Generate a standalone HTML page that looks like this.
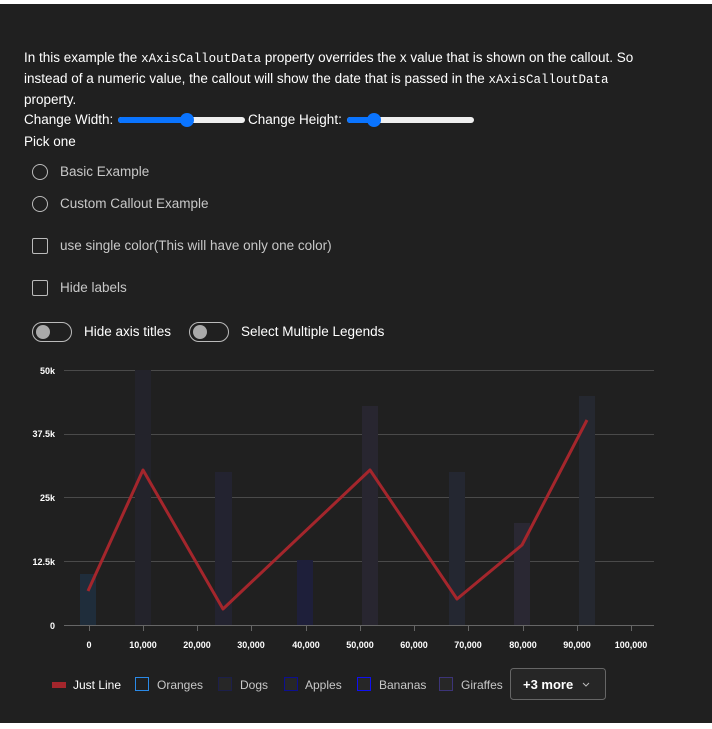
<!DOCTYPE html>
<html><head><meta charset="utf-8"><style>
html,body{margin:0;padding:0;background:#fff;}
body{width:712px;height:729px;overflow:hidden;font-family:"Liberation Sans",sans-serif;}
#f{position:absolute;left:0;top:4px;width:712px;height:719px;background:#202020;}
.t{position:absolute;color:#fff;font-size:13.5px;white-space:nowrap;}
code{font-family:"Liberation Mono",monospace;font-size:12.5px;}
.g{color:#c8c8c8;}
.rad{position:absolute;width:14px;height:14px;border:1px solid #bbb;border-radius:50%;}
.chk{position:absolute;width:14px;height:14px;border:1px solid #bbb;border-radius:2px;}
.tog{position:absolute;width:38px;height:18px;border:1px solid #bbb;border-radius:10px;}
.tog:after{content:"";position:absolute;left:3px;top:2px;width:14px;height:14px;border-radius:50%;background:#aaa;}
.sl{position:absolute;height:6px;border-radius:3px;background:#efefef;}
.sl i{position:absolute;left:0;top:0;height:6px;border-radius:3px;background:#0a74ff;}
.sl b{position:absolute;top:-4px;width:14px;height:14px;border-radius:50%;background:#0a74ff;}
</style></head><body><div id="f"></div>
<div class="t" style="left:24px;top:50px">In this example the <code>xAxisCalloutData</code> property overrides the x value that is shown on the callout. So</div>
<div class="t" style="left:24px;top:71px">instead of a numeric value, the callout will show the date that is passed in the <code>xAxisCalloutData</code></div>
<div class="t" style="left:24px;top:92px">property.</div>
<div class="t" style="left:24px;top:112px">Change Width:</div>
<div class="sl" style="left:118px;top:117px;width:127px"><i style="width:70px"></i><b style="left:62px"></b></div>
<div class="t" style="left:248px;top:112px">Change Height:</div>
<div class="sl" style="left:347px;top:117px;width:127px"><i style="width:28px"></i><b style="left:20px"></b></div>
<div class="t" style="left:24px;top:134px">Pick one</div>
<div class="rad" style="left:32px;top:164px"></div><div class="t g" style="left:60px;top:164px">Basic Example</div>
<div class="rad" style="left:32px;top:196px"></div><div class="t g" style="left:60px;top:196px">Custom Callout Example</div>
<div class="chk" style="left:32px;top:238px"></div><div class="t g" style="left:60px;top:238px">use single color(This will have only one color)</div>
<div class="chk" style="left:32px;top:280px"></div><div class="t g" style="left:60px;top:280px">Hide labels</div>
<div class="tog" style="left:32px;top:322px"></div><div class="t" style="left:84px;top:324px">Hide axis titles</div>
<div class="tog" style="left:189px;top:322px"></div><div class="t" style="left:241px;top:324px">Select Multiple Legends</div>
<svg style="position:absolute;left:0;top:0" width="712" height="729" font-family="Liberation Sans,sans-serif" font-size="9" font-weight="bold" fill="#fff">
<g stroke="#4a4a4a" stroke-width="1">
<line x1="64" y1="370.5" x2="654" y2="370.5"/><line x1="64" y1="434.5" x2="654" y2="434.5"/>
<line x1="64" y1="497.5" x2="654" y2="497.5"/><line x1="64" y1="561.5" x2="654" y2="561.5"/>
<line x1="64" y1="625.5" x2="654" y2="625.5" stroke="#666"/>
</g>
<g stroke="#666"><line x1="89.5" y1="625" x2="89.5" y2="631"/><line x1="143.5" y1="625" x2="143.5" y2="631"/><line x1="197.5" y1="625" x2="197.5" y2="631"/><line x1="251.5" y1="625" x2="251.5" y2="631"/><line x1="306.5" y1="625" x2="306.5" y2="631"/><line x1="360.5" y1="625" x2="360.5" y2="631"/><line x1="414.5" y1="625" x2="414.5" y2="631"/><line x1="468.5" y1="625" x2="468.5" y2="631"/><line x1="523.5" y1="625" x2="523.5" y2="631"/><line x1="577.5" y1="625" x2="577.5" y2="631"/><line x1="631.5" y1="625" x2="631.5" y2="631"/></g>
<rect x="80" y="574" width="16" height="51" fill="#1f2d3b"/>
<rect x="135" y="370" width="16" height="255" fill="#23232b"/>
<rect x="215" y="472" width="17" height="153" fill="#232330"/>
<rect x="297" y="560" width="16" height="65" fill="#1e1f3a"/>
<rect x="362" y="406" width="16" height="219" fill="#282630"/>
<rect x="449" y="472" width="16" height="153" fill="#242731"/>
<rect x="514" y="523" width="16" height="102" fill="#2a2833"/>
<rect x="579" y="396" width="16" height="229" fill="#252830"/>
<polyline points="88,591 143,470 223,609 370,470 457,599 522,545 587,420" fill="none" stroke="#a4262c" stroke-width="3" stroke-linejoin="round"/>
<g text-anchor="end"><text x="55" y="374">50k</text><text x="55" y="437">37.5k</text><text x="55" y="501">25k</text><text x="55" y="565">12.5k</text><text x="55" y="629">0</text></g>
<g text-anchor="middle"><text x="89" y="648">0</text><text x="143" y="648">10,000</text><text x="197" y="648">20,000</text><text x="251" y="648">30,000</text><text x="306" y="648">40,000</text><text x="360" y="648">50,000</text><text x="414" y="648">60,000</text><text x="468" y="648">70,000</text><text x="523" y="648">80,000</text><text x="577" y="648">90,000</text><text x="631" y="648">100,000</text></g>
<rect x="52" y="682" width="14" height="6" fill="#a4262c"/>
<rect x="135.5" y="677.5" width="13" height="13" fill="none" stroke="#2a8ae8"/>
<rect x="218.5" y="677.5" width="13" height="13" fill="#272727" stroke="#1c1f4a"/>
<rect x="284.5" y="677.5" width="13" height="13" fill="#272727" stroke="#0c0f90"/>
<rect x="357.5" y="677.5" width="13" height="13" fill="#272727" stroke="#1010f0"/>
<rect x="439.5" y="677.5" width="13" height="13" fill="#272727" stroke="#3c3478"/>
<rect x="510.5" y="668.5" width="95" height="31" rx="3" fill="#262626" stroke="#666"/>
<g font-weight="normal" font-size="12"><text x="73" y="689">Just Line</text>
<g fill="#c8c8c8"><text x="157" y="689">Oranges</text><text x="240" y="689">Dogs</text><text x="305" y="689">Apples</text><text x="379" y="689">Bananas</text><text x="461" y="689">Giraffes</text></g></g>
<text x="523" y="689" font-size="13">+3 more</text>
<path d="M583 683 l3 3 l3 -3" fill="none" stroke="#bbb" stroke-width="1"/>
</svg>
</body></html>
